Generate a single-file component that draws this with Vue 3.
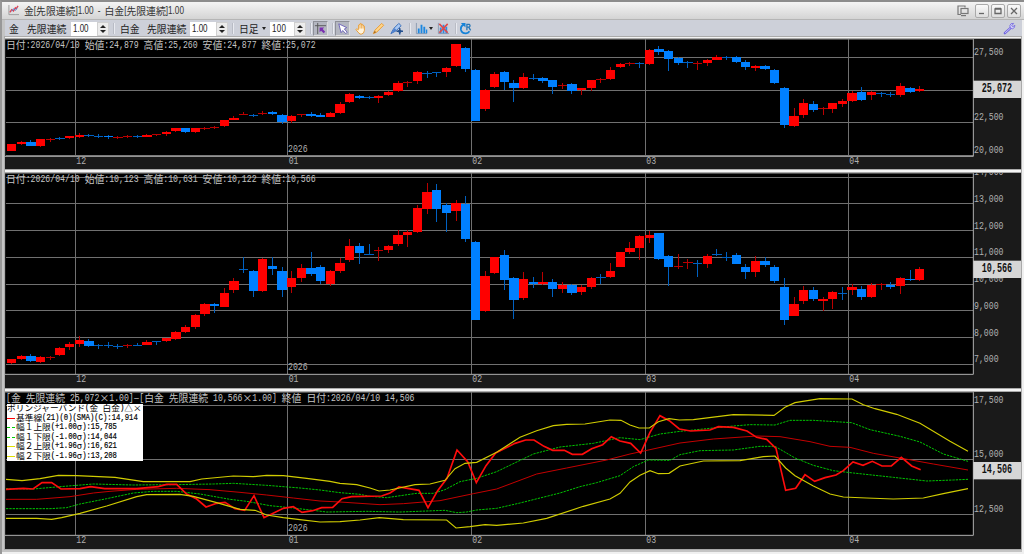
<template>
  <div class="window">
    <header class="title-bar">
      <svg class="app-icon" viewBox="0 0 12 12">
        <path d="M1 0V10.5H12" fill="none" stroke="#999" />
        <path d="M2 8L4 5L6 6.5L8 3L9 4L11 1" fill="none" stroke="#e04050" stroke-width="1.4" />
        <path d="M4 7l2-3 2 2 2-3" fill="none" stroke="#5080d0" stroke-width="1" />
      </svg>
      <span class="title"><CellText text="金[先限連続]1.00 - 白金[先限連続]1.00" /></span>
      <svg class="pop-icon" viewBox="0 0 12 12" fill="none" stroke="#777" stroke-width="1.2">
        <path d="M4 9.5H1V1H8V2.5" />
        <rect x="4" y="3.5" width="7" height="5" />
        <path d="M4 10.6h5" />
      </svg>
      <div class="win-buttons">
        <span class="win-btn"><svg viewBox="0 0 10 10"><path d="M2 7.5h5" /></svg></span>
        <span class="win-btn"><svg viewBox="0 0 10 10"><path d="M2 3h6v4.5H2zM2 2.5h6" /></svg></span>
        <span class="win-btn"><svg viewBox="0 0 10 10"><path d="M2 2l6 6M8 2l-6 6" /></svg></span>
      </div>
    </header>

    <div class="toolbar">
      <span class="label w-gold"><CellText text="金" /></span>
      <span class="label w-name"><CellText text="先限連続" /></span>
      <span class="num-input"><b>1.00</b><i class="spin"></i></span>
      <i class="sep"></i>
      <span class="label w-plat"><CellText text="白金" /></span>
      <span class="label w-name"><CellText text="先限連続" /></span>
      <span class="num-input second"><b>1.00</b><i class="spin"></i></span>
      <i class="sep"></i>
      <span class="label w-day"><CellText text="日足" /></span>
      <i class="caret"></i>
      <span class="num-input third"><b>100</b><i class="spin"></i></span>
      <i class="sep"></i>
      <span class="tool pressed">
        <svg viewBox="0 0 14 14">
          <path d="M4 1V13M1 4H13" fill="none" stroke="#555" />
          <path d="M6 6h5L9.400 7.600 12 10.500 10.500 12 7.600 9.400 6 11z" fill="#7a30b0" />
        </svg>
      </span>
      <i class="sep tight"></i>
      <span class="tool pressed">
        <svg viewBox="0 0 14 14">
          <path d="M3 2L11.500 6L9 7.500L12 11L10.500 12.500L7.300 9.200L5.500 11.500z" fill="#fff" stroke="#6a60b8" />
        </svg>
      </span>
      <span class="tool hand">
        <svg viewBox="0 0 14 14">
          <path d="M5 8V3.200q.8-1 1.500 0V2q.9-1 1.600 0v1q.9-.9 1.600 0v1.300q1-.8 1.500.2V9q-.3 3.500-3 4H6.500Q4.500 11.500 2 8q.7-1.500 3 .5" fill="#fff3dc" stroke="#e79a31" />
          <path d="M6.500 3v4M8.200 3v4M9.800 4v3" stroke="#e79a31" stroke-width=".8" />
        </svg>
      </span>
      <span class="tool pen">
        <svg viewBox="0 0 14 14">
          <path d="M1.500 12.500L3 9L10.500 1.500L12.500 3.500L5 11z" fill="#ffd58a" stroke="#e9992f" />
          <path d="M1.500 12.500L3 9.500L4.500 11z" fill="#a66a20" />
        </svg>
      </span>
      <span class="tool brush">
        <svg viewBox="0 0 14 14">
          <path d="M1 12.500L4 7L9.500 1.500L12 4L6.500 9.500z" fill="#a9c8f2" stroke="#356bb8" />
          <path d="M1 12.500L5 6.500L7 9z" fill="#4d7fce" />
          <path d="M10.500 6.500V13.500M7 10H14" stroke="#25518f" stroke-width="1.500" />
          <path d="M10.500 7.500L13 10L10.500 12.500L8 10z" fill="#25518f" />
        </svg>
      </span>
      <i class="sep"></i>
      <span class="tool bars">
        <svg viewBox="0 0 14 14">
          <path d="M1.500 1V12.500H13" fill="none" stroke="#8a9ab0" />
          <path d="M3 12V7h2v5M6 12V3h2v9M9 12V5h2v7M11.700 12V8h1.500v4" fill="#1c87e0" />
        </svg>
      </span>
      <i class="caret small"></i>
      <span class="tool nobars">
        <svg viewBox="0 0 14 14">
          <path d="M1.500 1V12.500H13" fill="none" stroke="#8a9ab0" />
          <path d="M3 12V6h2v6M6 12V3h2v9M9 12V5h2v7" fill="#2f8be0" />
          <path d="M2.500 2L11.500 11.500M11.500 2L2.500 11.500" stroke="#e04848" stroke-width="1.700" />
        </svg>
      </span>
      <i class="sep wide"></i>
      <span class="tool">
        <svg viewBox="0 0 14 14">
          <path d="M5 2.800Q1.700 4.200 2 8Q3 12.300 7.500 12.200Q10 12 11.300 10" fill="none" stroke="#1683d8" stroke-width="1.900" />
          <path d="M2 1h5v5z" fill="#1683d8" />
          <path d="M8.500 9V2.500h2.500q1.800 1.500 0 3H8.500M10.500 5.500L12.500 9" fill="none" stroke="#2878b8" stroke-width="1.400" />
        </svg>
      </span>
      <svg class="wrench" viewBox="0 0 14 14">
        <path d="M2 12L8 6.500" stroke="#7065e0" stroke-width="2.600" stroke-linecap="round" />
        <path d="M2.300 11.700L8 6.500" stroke="#dad6ff" stroke-width=".9" />
        <path d="M11.500 1.500Q8 .8 7.300 4Q7.300 7.500 10.300 7.300Q13 6.500 12.800 3.500L10.700 5L9.300 4z" fill="#d5d1fb" stroke="#7a70e0" />
      </svg>
    </div>

    <main class="charts">
      <section v-for="(pane, p) in panes" :key="p" class="pane">
        <svg class="plot" :style="{ height: pane.height / 3 + 'px' }" :viewBox="`15 ${pane.top} 3048 ${pane.height}`">
          <rect x="15" :y="pane.top" width="3048" :height="pane.height" fill="#1a1a1a" />
          <rect x="18" :y="pane.top" width="2901" :height="pane.base - pane.top" fill="#000" />
          <g class="grid">
            <path v-for="y in pane.rows" :key="'r' + y" :d="`M18 ${y}H2919`" />
            <path v-for="m in months" :key="m.label" :d="`M${m.x} ${pane.top}V${pane.base}`" />
          </g>
          <g v-for="(c, i) in pane.candles" :key="i" class="candle" :class="c.kind">
            <rect class="wick" :x="center(i) - 1.5" :y="c.high" width="3" :height="c.low - c.high" />
            <rect :class="{ wick: c.bottom - c.top < 4 }" :x="center(i) - 14" :y="c.top" width="28" :height="Math.max(3, c.bottom - c.top)" />
          </g>
          <polyline v-for="l in pane.lines" :key="l.name" :class="['line', l.name]" :points="l.points" />
          <path :d="`M15 ${pane.base}H2920V${pane.top}`" class="frame" />
          <path :d="`M15 ${pane.top + 1.5}H2920`" class="top-edge" />
          <g class="axis">
            <text v-for="t in pane.ticks" :key="t[0]" :transform="`translate(2922 ${t[1]}) scale(1 1.4)`">{{ t[0] }}</text>
            <text v-for="m in months" :key="m.label" :transform="`translate(${m.x + 4} ${pane.base + 22}) scale(1 1.4)`">{{ m.label }}</text>
            <text :transform="`translate(864 ${pane.base - 12}) scale(1 1.4)`">2026</text>
          </g>
          <rect x="2920" :y="pane.badgeY" width="143" height="52" fill="#d6d6d6" />
          <text class="badge" :transform="`translate(2945 ${pane.badgeY + 33}) scale(1 1.4)`">{{ pane.badge }}</text>
        </svg>
        <div class="caption"><CellText :text="pane.caption" /></div>
        <div v-if="pane.legend" class="legend">
          <div v-for="row in pane.legend" :key="row.text" class="legend-row">
            <i v-if="row.kind" class="swatch" :class="row.kind"></i>
            <CellText :text="row.text" />
          </div>
        </div>
      </section>
    </main>
  </div>
</template>

<script setup>
import { h } from 'vue'

// Splits a string into full width and half width runs so both keep the 2:1 cell grid
const CellText = (props) => h('span', { class: 'cells' },
  props.text.match(/[\x20-\x7e]+|[^\x20-\x7e]+/g).map((run) =>
    h('span', { class: run.charCodeAt(0) < 127 ? 'half' : 'full' }, run)
  )
)
CellText.props = ['text']

const months = [
  { label: '12', x: 225 },
  { label: '01', x: 862 },
  { label: '02', x: 1413 },
  { label: '03', x: 1935 },
  { label: '04', x: 2544 }
]

const center = (i) => 35 + i * 28.98

// kind top bottom high low, chart units are a third of a pixel
const parse = (src) => src.trim().split(/\s*,\s*/).map((row) => {
  const [kind, top, bottom, high, low] = row.split(' ')
  return { kind: kind === 'r' ? 'up' : 'down', top: +top, bottom: +bottom, high: +high, low: +low }
})

const gold = parse(`r 324 344 323 345,r 318 324 314 326,b 319 329 312 330,r 310 331 309 334,r 309 311 306 318,
b 307 309 303 311,r 301 306 299 309,r 297 303 290 306,b 296 299 293 302,b 299 301 295 307,
b 300 304 296 309,r 303 305 300 310,r 300 302 296 306,b 300 302 297 305,r 297 302 294 304,
r 295 298 294 299,r 287 295 284 300,r 277 286 275 289,b 277 288 276 290,r 277 288 275 290,
r 275 278 273 281,r 273 275 270 279,r 252 271 251 272,r 246 252 241 253,r 233 235 229 237,
b 236 238 234 243,r 230 233 226 237,b 229 234 224 238,b 237 258 234 264,r 240 255 237 261,
r 235 238 234 244,b 234 239 227 242,b 237 242 232 244,r 230 242 228 244,r 203 230 198 233,
r 174 199 171 202,b 179 186 176 190,b 184 187 180 190,r 179 185 176 200,r 169 177 166 179,
r 141 165 136 167,r 138 140 135 154,r 108 136 104 144,b 111 113 106 126,b 108 110 107 124,
r 95 108 93 123,r 25 89 24 93,b 35 98 33 107,b 102 255 100 256,r 162 220 159 224,
r 115 152 109 155,b 109 139 106 162,b 140 156 132 197,r 122 155 111 159,b 126 128 114 132,
b 127 135 122 142,b 133 153 131 174,r 147 149 140 159,b 145 165 141 174,r 157 163 155 177,
r 133 155 132 165,r 129 132 126 142,r 102 129 93 132,r 85 94 82 97,r 81 84 77 90,
b 82 84 79 96,r 42 84 39 88,b 38 47 30 56,b 45 69 42 106,b 66 81 64 88,
b 78 81 76 97,r 82 84 74 101,r 71 81 69 91,r 64 71 57 72,b 64 66 60 73,
b 64 77 61 82,b 79 94 73 101,r 90 95 88 104,b 90 98 88 103,b 102 141 99 143,
b 155 268 153 276,r 241 270 217 274,r 201 237 188 245,b 203 223 195 227,r 217 219 214 237,
r 202 219 200 230,r 196 204 189 213,r 171 194 164 199,b 169 191 152 195,r 167 177 165 192,
b 172 174 168 184,b 174 177 167 182,r 151 177 142 183,b 155 167 153 170,r 160 165 151 167`)

const platinum = parse(`r 568 580 566 583,r 558 567 554 571,b 558 573 553 577,r 561 576 557 580,r 561 563 557 569,
r 534 556 531 558,r 521 530 517 540,r 510 522 499 530,b 513 527 507 530,b 526 528 521 537,
b 526 528 517 533,b 528 530 523 537,r 524 526 522 533,b 524 526 518 529,r 515 525 509 526,
b 514 516 512 526,r 505 513 503 516,r 486 506 484 509,r 472 487 466 490,r 436 472 431 477,
r 401 432 399 439,b 402 408 399 428,r 369 410 355 412,r 333 360 325 369,b 298 300 261 310,
b 302 362 300 382,r 266 363 264 365,b 288 298 261 315,b 302 360 292 382,r 325 350 302 370,
r 294 323 282 336,b 294 313 246 319,b 292 333 285 342,r 302 342 299 347,r 278 303 264 309,
r 227 271 206 275,b 227 249 219 281,b 251 253 223 255,r 239 241 230 272,r 227 240 225 248,
r 196 223 181 228,r 186 195 179 231,r 115 185 105 189,r 65 116 38 132,b 60 116 42 155,
b 106 130 99 186,r 98 123 91 153,b 101 207 78 217,b 215 449 213 450,r 318 423 302 426,
r 262 308 260 312,b 254 331 241 360,b 325 389 321 447,r 328 384 306 389,b 336 342 321 354,
r 336 342 305 346,b 336 357 327 382,r 345 357 337 370,b 345 368 342 376,r 352 367 345 374,
r 323 351 321 357,b 320 322 313 342,r 302 322 280 325,r 247 291 245 292,r 234 245 217 253,
r 199 233 194 270,r 194 203 183 219,b 190 266 189 270,b 259 291 254 347,r 287 289 253 297,
r 276 278 266 298,b 278 280 270 322,r 258 281 252 294,b 252 255 237 259,b 262 264 246 272,
b 256 281 250 283,b 290 305 283 327,r 273 307 258 320,b 273 284 262 291,b 292 334 284 340,
b 352 449 323 464,r 402 437 381 439,r 361 394 347 402,b 359 387 352 393,r 388 394 382 422,
r 366 387 362 416,b 368 370 352 389,r 352 359 343 375,b 357 382 349 389,r 345 380 338 383,
r 343 345 339 360,b 345 350 335 356,r 323 348 320 373,b 326 331 301 334,r 297 331 291 333`)

const bands = [
  { name: 'mid', points: '18,346 110,346 210,338 280,327 330,322 410,316 530,313 630,317 720,325 800,333 880,342 960,351 1020,354 1080,358 1140,362 1210,359 1320,350 1420,329 1490,315 1610,270 1700,252 1820,228 1890,210 1950,197 2040,177 2140,165 2270,156 2340,158 2430,173 2490,187 2550,190 2620,208 2700,222 2800,240 2904,258' },
  { name: 'inner upper', points: '18,314 100,315 180,308 280,300 400,303 520,302 640,300 700,298 800,304 900,312 960,318 1020,326 1080,331 1110,337 1160,341 1250,328 1300,328 1335,317 1380,293 1430,283 1490,263 1600,210 1680,189 1780,178 1860,161 1920,167 1980,150 2040,142 2110,135 2200,126 2250,122 2325,123 2370,109 2440,109 2555,116 2610,137 2700,157 2760,174 2830,210 2904,232' },
  { name: 'inner lower', points: '18,374 150,374 200,371 240,360 320,344 400,327 460,322 530,322 600,330 690,346 740,352 810,365 880,372 980,384 1100,382 1200,384 1335,379 1370,386 1400,384 1430,378 1490,373 1560,357 1680,327 1740,308 1790,296 1860,275 1900,248 1945,228 2010,229 2040,212 2100,200 2200,198 2280,187 2325,187 2385,222 2440,244 2500,260 2560,267 2680,280 2780,291 2860,288 2904,286' },
  { name: 'price', points: '18,316 70,313 99,315 126,296 155,296 183,315 240,314 272,308 314,314 410,314 475,308 500,301 530,301 560,330 590,345 618,369 650,358 675,355 705,374 734,379 762,335 792,401 850,373 880,368 906,385 938,380 965,371 998,370 1026,344 1055,338 1145,336 1170,327 1197,309 1257,319 1284,371 1313,320 1341,283 1371,198 1403,233 1429,296 1458,245 1487,207 1545,178 1577,168 1602,168 1632,187 1658,199 1693,199 1717,211 1747,211 1775,194 1808,182 1834,158 1860,171 1892,178 1922,207 1950,145 1980,95 2008,110 2038,135 2072,141 2130,138 2155,128 2200,130 2241,141 2270,160 2300,166 2328,193 2357,319 2387,313 2415,272 2444,292 2475,281 2508,273 2530,260 2559,234 2589,244 2617,232 2646,246 2674,246 2704,220 2735,246 2762,257' },
  { name: 'outer upper', points: '18,286 66,290 120,284 175,274 230,275 345,280 430,293 570,293 605,285 700,276 760,278 800,274 850,275 920,283 990,292 1020,298 1070,302 1110,312 1137,321 1170,318 1245,302 1290,300 1335,289 1365,254 1395,238 1430,235 1490,205 1560,160 1610,140 1660,125 1700,121 1755,120 1830,108 1863,109 1890,123 1917,132 1948,132 1975,113 2007,104 2038,108 2080,107 2200,92 2322,94 2355,70 2385,56 2460,44 2556,45 2590,62 2625,74 2690,91 2760,118 2850,172 2904,202' },
  { name: 'outer lower', points: '18,403 110,403 155,406 185,401 240,388 320,366 410,338 440,332 540,331 580,337 650,356 720,376 765,379 800,393 850,401 900,407 960,414 1020,413 1080,408 1138,401 1210,407 1340,408 1368,432 1410,428 1455,422 1490,424 1570,417 1640,403 1750,367 1830,345 1860,328 1890,294 1920,274 1950,260 1975,269 2007,268 2040,246 2110,231 2220,230 2290,218 2325,216 2357,252 2385,275 2440,306 2490,330 2530,339 2600,342 2680,345 2770,342 2830,329 2904,314' }
]

const panes = [
  {
    top: 9, height: 390, base: 361, candles: gold, lines: [],
    rows: [65, 163, 259, 357],
    ticks: [['27,500', 58], ['22,500', 252], ['20,000', 350]],
    badge: '25,072', badgeY: 134,
    caption: '日付:2026/04/10 始値:24,879 高値:25,260 安値:24,877 終値:25,072'
  },
  {
    top: 9, height: 645, base: 613, candles: platinum, lines: [],
    rows: [22, 101, 182, 262, 343, 422, 503, 583],
    ticks: [['14,000', 15], ['13,000', 95], ['12,000', 176], ['11,000', 256], ['10,000', 336], ['9,000', 416], ['8,000', 497], ['7,000', 577]],
    badge: '10,566', badgeY: 272,
    caption: '日付:2026/04/10 始値:10,123 高値:10,631 安値:10,122 終値:10,566'
  },
  {
    top: 24, height: 471, base: 454, candles: [], lines: bands,
    rows: [63, 226, 391],
    ticks: [['17,500', 57], ['15,000', 220], ['12,500', 385]],
    badge: '14,506', badgeY: 234,
    caption: '[金 先限連続 25,072×1.00]−[白金 先限連続 10,566×1.00] 終値 日付:2026/04/10 14,506',
    legend: [
      { text: 'ボリンジャーバンド(金 白金)△×' },
      { kind: 'base', text: '基準線(21)(0)(SMA)(C):14,914' },
      { kind: 'one', text: '幅１上限(+1.00σ):15,785' },
      { kind: 'one', text: '幅１下限(-1.00σ):14,044' },
      { kind: 'two', text: '幅２上限(+1.96σ):16,621' },
      { kind: 'two', text: '幅２下限(-1.96σ):13,208' }
    ]
  }
]
</script>

<style>
body {
  margin: 0;
  overflow: hidden;
}

.cells {
  display: inline-flex;
  align-items: center;
  white-space: pre;
  line-height: 12px;
}

.cells .full {
  font-family: "Noto Sans CJK JP", sans-serif;
  font-size: 9.84px;
  font-feature-settings: "fwid";
}

.cells .half {
  font-family: "Liberation Mono", monospace;
  font-size: 8.2px;
  transform: scaleY(1.35);
}
</style>

<style scoped>
.window {
  box-sizing: border-box;
  width: 1024px;
  height: 554px;
  display: flex;
  flex-direction: column;
  background: #c4c4c4;
  border-top: 2px solid #8c8c8c;
  border-left: 2px solid #989898;
  box-shadow: inset -2px -2px 0 #f0f0f0;
}

.title-bar {
  height: 17px;
  flex: none;
  display: flex;
  align-items: center;
  padding-left: 6px;
  padding-right: 3px;
  background: linear-gradient(#f4f4f4, #d4d4d4);
  border-bottom: 1px solid #b5b5b5;
}

.app-icon {
  width: 11px;
  height: 11px;
  margin-right: 5px;
}

.title {
  display: flex;
  color: #333;
}

.title :deep(.half) {
  font-family: "Liberation Sans", sans-serif;
  font-size: 8.2px;
  word-spacing: 1.8px;
}

.pop-icon {
  width: 12px;
  height: 12px;
  margin-left: auto;
  margin-right: 6px;
}

.win-buttons {
  display: flex;
  gap: 2px;
}

.win-btn {
  box-sizing: border-box;
  width: 14px;
  height: 14px;
  border: 1px solid #aaa;
  border-radius: 2px;
  background: linear-gradient(#fafafa, #ddd);
  display: flex;
  align-items: center;
  justify-content: center;
}

.win-btn svg {
  flex: none;
  width: 10px;
  height: 10px;
  fill: none;
  stroke: #666;
  stroke-width: 1.3;
}

.toolbar {
  box-sizing: border-box;
  height: 17px;
  flex: none;
  display: flex;
  align-items: center;
  margin: 0 2px 0 3px;
  padding-left: 4px;
  background: #cdd0d9;
  color: #222;
}

.label {
  flex: none;
  display: flex;
}

.w-gold {
  width: 18px;
}

.w-name {
  width: 44px;
}

.w-plat {
  width: 27px;
}

.w-day {
  width: 23px;
}

.num-input {
  display: flex;
  flex: none;
  height: 14px;
  width: 38px;
  background: #fff;
}

.num-input.second {
  margin-left: -1px;
}

.num-input.third {
  width: 36px;
}

.num-input b {
  flex: 1;
  padding-left: 2px;
  font-family: "Liberation Sans", sans-serif;
  font-size: 8px;
  font-weight: normal;
  line-height: 13px;
  transform: scaleY(1.3);
}

.third b {
  letter-spacing: 0.3px;
}

.spin {
  width: 12px;
  display: flex;
  flex-direction: column;
  align-items: center;
  justify-content: center;
  gap: 2px;
  background: #ececec;
  border: 1px solid #d0d0d0;
  box-sizing: border-box;
}

.spin::before,
.spin::after {
  content: "";
  border: 3px solid transparent;
}

.spin::before {
  border-top: 0;
  border-bottom: 3px solid #222;
}

.spin::after {
  border-bottom: 0;
  border-top: 3px solid #222;
}

.sep {
  flex: none;
  width: 1px;
  height: 11px;
  margin: 0 5px 0 4px;
  background: #e8eaf0;
  border-left: 1px solid #b9bcc5;
}

.sep.wide {
  margin: 0 1px 0 4px;
}

.sep.tight {
  margin: 0 1px 0 4px;
}

.toolbar .third + .sep {
  margin-right: 1px;
}

.caret {
  border: 2.5px solid transparent;
  border-top: 3px solid #222;
  border-bottom: 0;
  margin-right: 4px;
}

.caret.small {
  margin: 0 3px 0 0;
}

.tool {
  box-sizing: border-box;
  flex: none;
  width: 15px;
  height: 15px;
  display: flex;
  align-items: center;
  justify-content: center;
}

.tool svg {
  flex: none;
  width: 13px;
  height: 13px;
}

.tool.pressed {
  background: #b4b7c1;
  border: 1px solid #8e9098;
  border-right-color: #ddd;
  border-bottom-color: #ddd;
}

.hand,
.pen,
.brush {
  margin-left: 3px;
}

.brush {
  margin-right: 1px;
}

.bars {
  margin-left: -2px;
}

.wrench {
  width: 13px;
  height: 13px;
  margin-left: auto;
  margin-right: 6px;
}

.charts {
  display: flex;
  flex-direction: column;
  gap: 4px;
  margin-left: 3px;
  width: 1016px;
  border-top: 2px solid #f2f2f2;
  background: #f4f4f4;
  box-shadow: 0 0 0 1px #aaa;
  flex: none;
}

.charts .pane {
  position: relative;
  box-shadow: 0 0 0 1px #aaa;
}

.plot {
  display: block;
  width: 1016px;
}

.grid path {
  fill: none;
  stroke: #707070;
  stroke-width: 3;
  shape-rendering: crispEdges;
}

.candle rect {
  shape-rendering: crispEdges;
}

.up rect {
  fill: #f00;
}

.up .wick {
  fill: #bb0000;
}

.down rect {
  fill: #0080ff;
}

.down .wick {
  fill: #0061c2;
}

.line {
  fill: none;
  stroke-width: 3;
}

.mid {
  stroke: #c40000;
}

.price {
  stroke: #ff0c0c;
  stroke-width: 5;
}

.inner {
  stroke: #00c400;
  stroke-dasharray: 7 3;
}

.outer {
  stroke: #d0cc00;
  stroke-width: 3.4;
}

.frame {
  fill: none;
  stroke: #b0b0b0;
  stroke-width: 3;
}

.top-edge {
  fill: none;
  stroke: #777;
  stroke-width: 2;
}

.axis text,
.badge {
  font-family: "Liberation Mono", monospace;
  font-size: 24.6px;
  fill: #b0b0b0;
}

.badge {
  font-weight: bold;
  font-size: 25.4px;
  fill: #111;
}

.caption {
  position: absolute;
  left: 1px;
  top: 0;
  display: flex;
  color: #c4c4c4;
}

.legend {
  position: absolute;
  left: 2px;
  top: 12px;
  width: 136px;
  height: 57px;
  background: #fff;
  color: #000;
}

.legend-row {
  height: 9.5px;
  display: flex;
  align-items: center;
}

.legend-row :deep(.cells) {
  line-height: 9px;
}

.legend-row :deep(.full) {
  font-size: 8.7px;
  transform: translateY(-0.8px) scaleY(0.95);
}

.legend-row :deep(.half) {
  font-size: 7.25px;
  transform: scaleY(1.25);
  -webkit-text-stroke: 0.15px #000;
}

.swatch {
  width: 8px;
  margin-right: 1px;
  border-top: 1px solid red;
}

.swatch.one {
  border-top: 1px dashed #00d000;
}

.swatch.two {
  border-color: #e0e000;
}
</style>
